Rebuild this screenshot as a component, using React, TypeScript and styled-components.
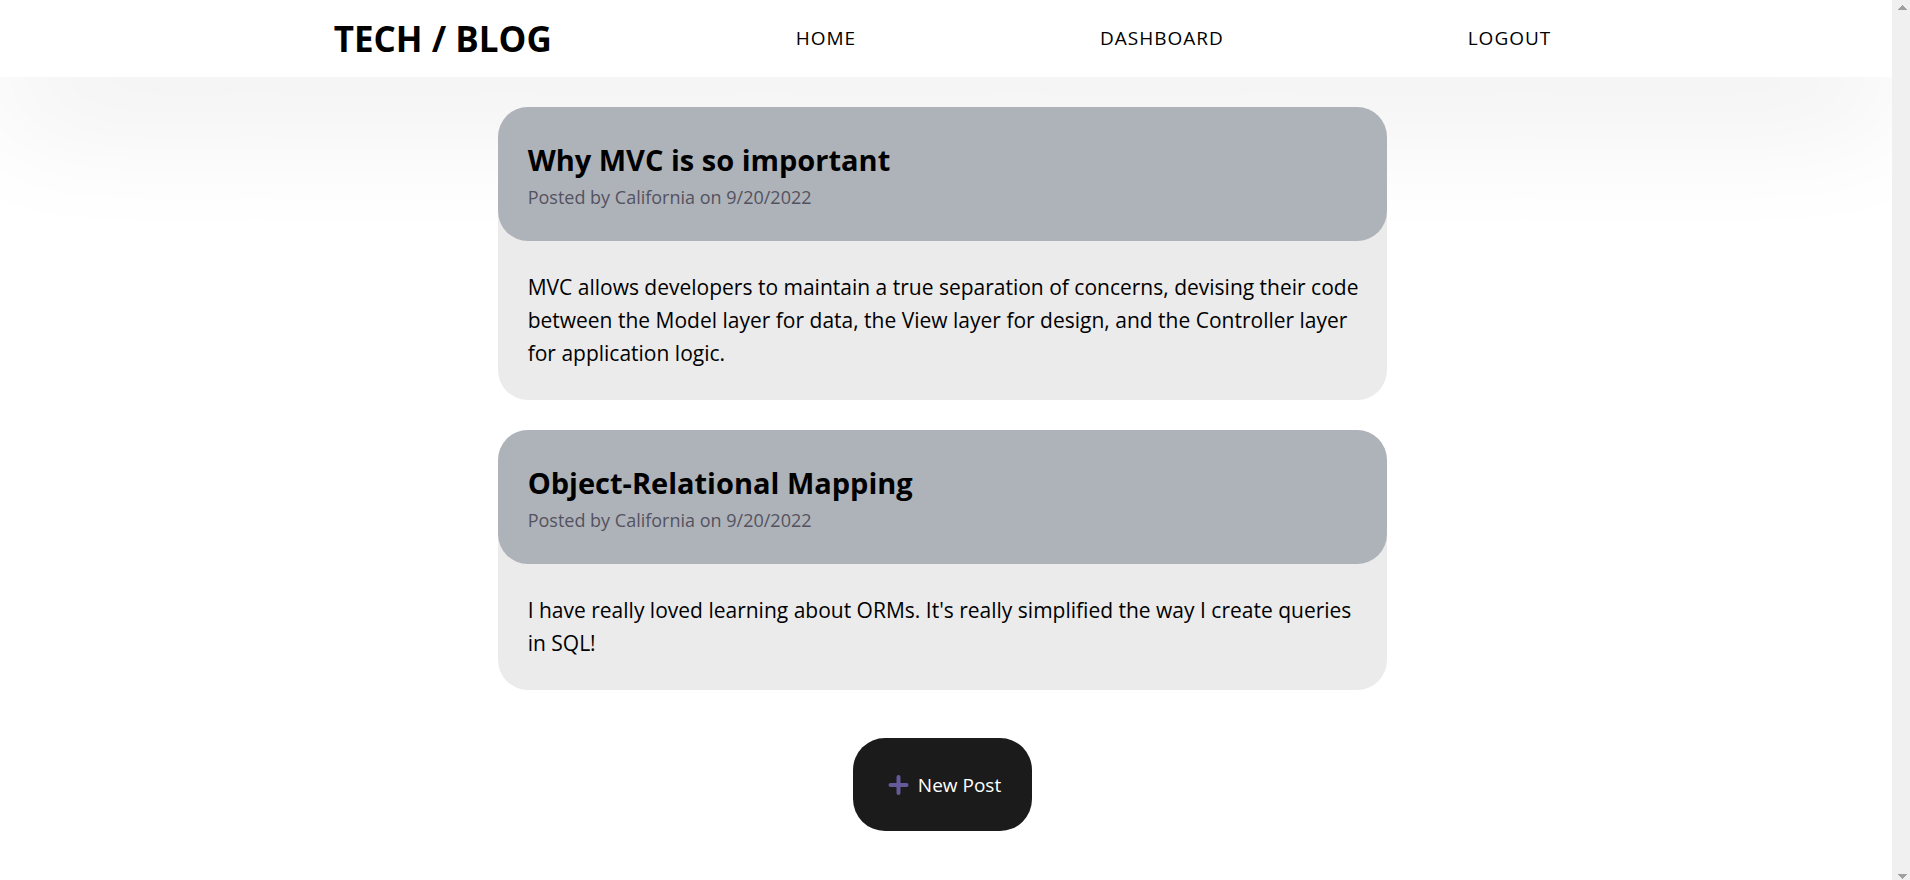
import React from "react";
import styled, { createGlobalStyle } from "styled-components";

const GlobalStyle = createGlobalStyle`
  * { box-sizing: border-box; }
  body {
    margin: 0;
    background: #fff;
    color: #000;
    font-family: "Open Sans", "Noto Sans", sans-serif;
    font-weight: 400;
  }
  h1, h2, p { margin: 0; padding: 0; }
`;

const Shell = styled.div`
  display: flex;
  height: 100vh;
  overflow: hidden;
`;

const Page = styled.div`
  flex: 1;
  min-width: 0;
`;

const Header = styled.header`
  height: 77px;
  padding-right: 7px;
  background: #fff;
  box-shadow: 0 36px 130px rgba(0, 0, 0, 0.09);
`;

const Nav = styled.nav`
  display: flex;
  align-items: center;
  justify-content: space-between;
  width: 64.6%;
  height: 100%;
  margin: 0 auto;
`;

const Brand = styled.h1`
  font-size: 35px;
  font-weight: 700;
  line-height: 48px;
`;

const NavLink = styled.a`
  padding-bottom: 2px;
  color: inherit;
  font-size: 19px;
  line-height: 26px;
  letter-spacing: 1px;
  text-decoration: none;
  text-transform: uppercase;
`;

const Main = styled.main`
  display: flex;
  flex-direction: column;
  align-items: center;
  padding: 30px 7px 48px 0;
`;

const Posts = styled.div`
  display: flex;
  flex-direction: column;
  gap: 30px;
  width: 47.2%;
  margin-bottom: 48px;
`;

const Card = styled.article`
  background: #ebebeb;
  border-radius: 30px;
`;

const CardHead = styled.header`
  padding: 30px;
  background: #aeb3ba;
  border-radius: 30px;
`;

const CardTitle = styled.h2`
  font-size: 29px;
  font-weight: 700;
  line-height: 46px;
`;

const CardMeta = styled.p`
  color: #55525f;
  font-size: 18px;
  line-height: 28px;
`;

const CardText = styled.p`
  padding: 30px 20px 30px 30px;
  font-size: 21px;
  line-height: 33px;
`;

const NewPostButton = styled.button`
  display: flex;
  align-items: center;
  gap: 7px;
  height: 93px;
  padding: 0 31px 0 34px;
  border: 0;
  border-radius: 32px;
  background: #1b1b1b;
  color: #fff;
  font: 400 19px/26px "Open Sans", "Noto Sans", sans-serif;
  cursor: pointer;
`;

const ScrollTrack = styled.div`
  display: flex;
  flex-direction: column;
  align-items: center;
  justify-content: space-between;
  position: relative;
  width: 18px;
  padding: 5px 0 1px 2px;
  background: #f0f0f0;
`;

const posts = [
  {
    title: "Why MVC is so important",
    meta: "Posted by California on 9/20/2022",
    text: "MVC allows developers to maintain a true separation of concerns, devising their code between the Model layer for data, the View layer for design, and the Controller layer for application logic.",
  },
  {
    title: "Object-Relational Mapping",
    meta: "Posted by California on 9/20/2022",
    text: "I have really loved learning about ORMs. It's really simplified the way I create queries in SQL!",
  },
];

const PlusIcon = () => (
  <svg width="24" height="24" viewBox="0 0 24 24" aria-hidden="true">
    <path d="M11.5 4V20M3.5 12H19.5" stroke="#655a99" strokeWidth="4" strokeLinecap="round" />
  </svg>
);

const ScrollArrow = ({ points }: { points: string }) => (
  <svg width="9" height="5" viewBox="0 0 9 5" shapeRendering="crispEdges" aria-hidden="true">
    <polygon points={points} fill="#a0a0a0" />
  </svg>
);

export default function App() {
  return (
    <>
      <GlobalStyle />
      <Shell>
        <Page>
          <Header>
            <Nav>
              <Brand>TECH / BLOG</Brand>
              <NavLink href="#home">Home</NavLink>
              <NavLink href="#dashboard">Dashboard</NavLink>
              <NavLink href="#logout">Logout</NavLink>
            </Nav>
          </Header>
          <Main>
            <Posts>
              {posts.map((post) => (
                <Card key={post.title}>
                  <CardHead>
                    <CardTitle>{post.title}</CardTitle>
                    <CardMeta>{post.meta}</CardMeta>
                  </CardHead>
                  <CardText>{post.text}</CardText>
                </Card>
              ))}
            </Posts>
            <NewPostButton type="button">
              <PlusIcon />
              New Post
            </NewPostButton>
          </Main>
        </Page>
        <ScrollTrack aria-hidden="true">
          <ScrollArrow points="4.5,0 9,5 0,5" />
          <ScrollArrow points="0,0 9,0 4.5,5" />
        </ScrollTrack>
      </Shell>
    </>
  );
}
